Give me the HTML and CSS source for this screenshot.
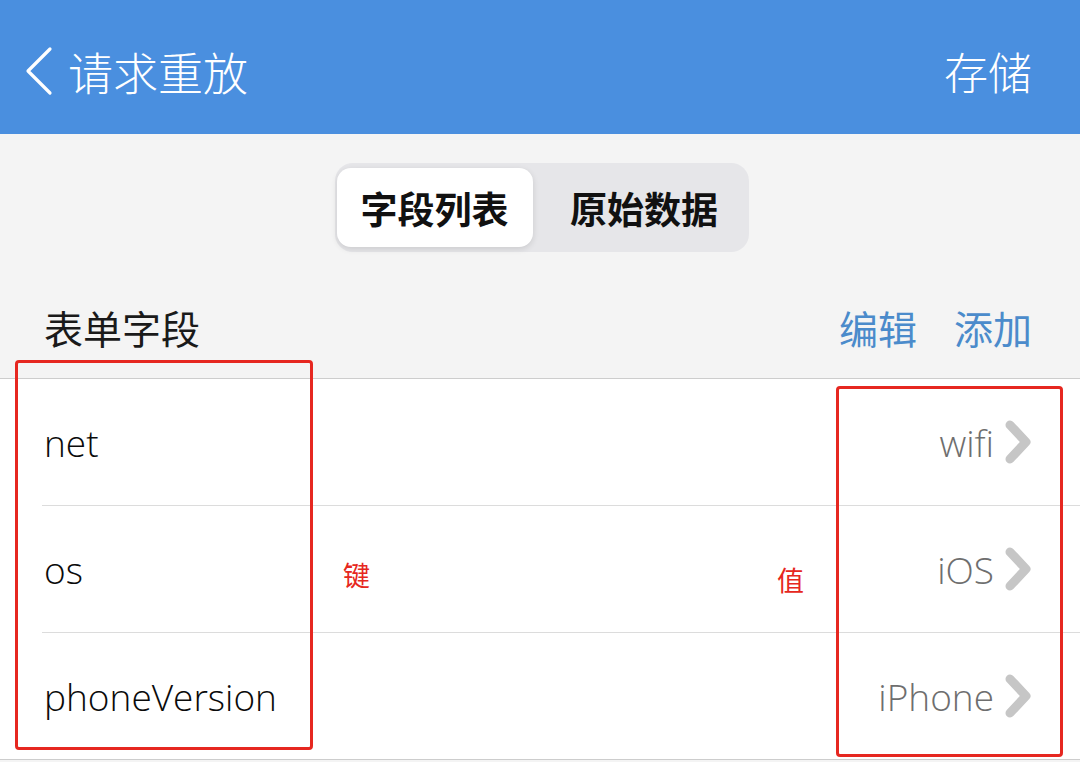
FILE: index.html
```html
<!DOCTYPE html>
<html lang="zh">
<head>
<meta charset="utf-8">
<link rel="stylesheet" href="styles.css">
</head>
<body>
<div class="screen">
  <header class="nav">
    <div class="nav-left">
      <svg class="back" width="30" height="50" viewBox="0 0 30 50"><polyline points="26,3 4,25 26,47" fill="none" stroke="#fff" stroke-width="3.2" stroke-linecap="round" stroke-linejoin="round"/></svg>
      <span class="nav-title">请求重放</span>
    </div>
    <span class="nav-action">存储</span>
  </header>

  <main class="content">
    <div class="seg-wrap">
      <div class="seg">
        <div class="seg-item active">字段列表</div>
        <div class="seg-item plain">原始数据</div>
      </div>
    </div>

    <div class="section-head">
      <span class="section-title">表单字段</span>
      <div class="section-actions">
        <span>编辑</span>
        <span>添加</span>
      </div>
    </div>

    <div class="list">
      <div class="row">
        <span class="key">net</span>
        <span class="val">wifi<svg class="chev" width="30" height="46" viewBox="0 0 30 46"><polyline points="7,6 23,23 7,40" fill="none" stroke="#c6c6c6" stroke-width="9" stroke-linecap="round" stroke-linejoin="round"/></svg></span>
      </div>
      <div class="row">
        <span class="key">os</span>
        <span class="val">iOS<svg class="chev" width="30" height="46" viewBox="0 0 30 46"><polyline points="7,6 23,23 7,40" fill="none" stroke="#c6c6c6" stroke-width="9" stroke-linecap="round" stroke-linejoin="round"/></svg></span>
      </div>
      <div class="row">
        <span class="key">phoneVersion</span>
        <span class="val">iPhone<svg class="chev" width="30" height="46" viewBox="0 0 30 46"><polyline points="7,6 23,23 7,40" fill="none" stroke="#c6c6c6" stroke-width="9" stroke-linecap="round" stroke-linejoin="round"/></svg></span>
      </div>
    </div>
  </main>

  <div class="annot box-key"></div>
  <div class="annot box-val"></div>
  <span class="annot-label label-key">键</span>
  <span class="annot-label label-val">值</span>
</div>
</body>
</html>
```

FILE: styles.css
```css
* { box-sizing: border-box; }
html, body {
  margin: 0;
  padding: 0;
  width: 1080px;
  height: 762px;
  overflow: hidden;
  background: #f4f4f4;
  font-family: "Noto Sans CJK SC", "Noto Sans", sans-serif;
}
.screen {
  position: relative;
  width: 1080px;
  height: 762px;
  background: #f4f4f4;
}
.nav {
  height: 134px;
  background: #4a8fdf;
  display: flex;
  align-items: center;
  justify-content: space-between;
  padding: 8px 48px 0 24px;
  color: #fff;
}
.nav-left {
  display: flex;
  align-items: center;
}
.back { display: block; }
.nav-title {
  margin-left: 14px;
  font-size: 45px;
  font-weight: 300;
  line-height: 1;
}
.nav-action {
  font-size: 44px;
  font-weight: 300;
  line-height: 1;
}
.content { display: flex; flex-direction: column; }
.seg-wrap {
  display: flex;
  justify-content: center;
  padding-top: 29px;
}
.seg {
  display: flex;
  width: 414px;
  height: 89px;
  padding: 5px 3px 5px 2px;
  background: #e6e6e9;
  border-radius: 18px;
  margin-left: 3px;
}
.seg-item {
  display: flex;
  align-items: center;
  justify-content: center;
  font-size: 37px;
  font-weight: 700;
  color: #111;
  flex: 1 1 0;
}
.seg-item.plain { padding-left: 10px; }
.seg-item.active {
  flex: 0 0 196px;
  background: #fff;
  border-radius: 14px;
  box-shadow: 0 2px 6px rgba(0,0,0,0.12);
}
.section-head {
  display: flex;
  justify-content: space-between;
  align-items: center;
  height: 127px;
  padding: 50px 48px 26px 44px;
  border-bottom: 1px solid #cdcdcd;
}
.section-title {
  font-size: 39px;
  color: #1a1a1a;
  line-height: 50px;
}
.section-actions {
  display: flex;
  gap: 37px;
  font-size: 39px;
  color: #4b8bcb;
  line-height: 50px;
}
.list {
  background: #fff;
  border-bottom: 1px solid #cdcdcd;
}
.row {
  margin-left: 42px;
  height: 127px;
  display: flex;
  align-items: center;
  justify-content: space-between;
  padding: 0 47px 0 2px;
  border-bottom: 1px solid #dcdcdc;
  font-family: "Open Sans", "Noto Sans", sans-serif;
  font-weight: 300;
  font-size: 37px;
}
.row:last-child { border-bottom: none; height: 126px; }
.key { color: #0a0a0a; }
.val {
  display: flex;
  align-items: center;
  color: #6e6e6e;
}
.chev { margin-left: 9px; display: block; }
.annot {
  position: absolute;
  border: 3px solid #e62720;
  border-radius: 4px;
}
.box-key { left: 15px; top: 360px; width: 298px; height: 390px; }
.box-val { left: 836px; top: 386px; width: 227px; height: 371px; }
.annot-label {
  position: absolute;
  color: #e62720;
  font-size: 27px;
  line-height: 1;
}
.label-key { left: 343px; top: 561px; }
.label-val { left: 777px; top: 566px; }
```
